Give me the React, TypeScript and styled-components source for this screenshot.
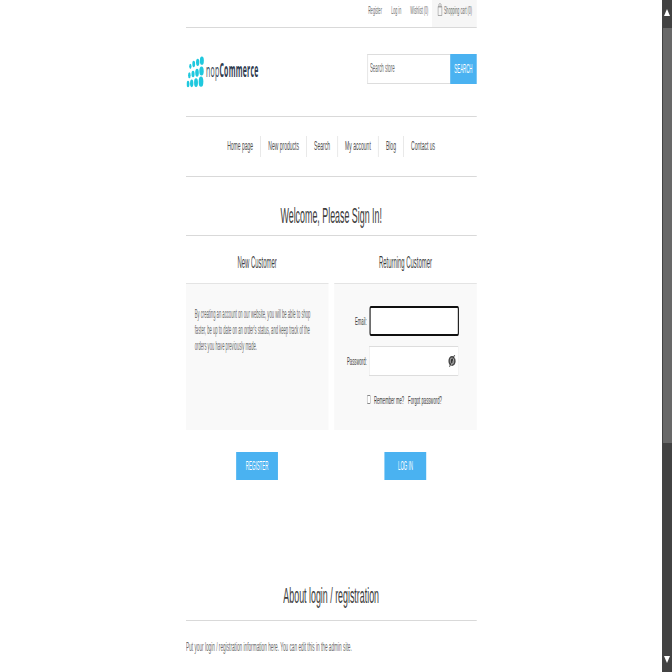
import React from "react";
import styled, { createGlobalStyle } from "styled-components";

// The shop column is condensed horizontally; x() converts a visible width
// into the column's own uncondensed units.
const K = 0.3634;
const x = (px: number) => `${px / K}px`;

const Global = createGlobalStyle`
  * { box-sizing: border-box; }
  body { margin: 0; background: #fff; overflow: hidden; }
  button, input { font-family: inherit; border-radius: 0; margin: 0; }
`;

const Screen = styled.div`
  display: flex;
  width: 672px;
  height: 672px;
  overflow: hidden;
  background: #fff;
  font-family: "Liberation Sans", Arial, sans-serif;
`;
const Viewport = styled.main`
  width: 662px;
  height: 672px;
  overflow: hidden;
  padding-left: 185.6px;
`;
const Column = styled.div`
  width: ${x(290.6)};
  transform: scaleX(${K});
  transform-origin: 0 0;
  color: #3c3c3c;
  white-space: nowrap;
`;

const Wide = styled.span<{ $by: number; $left?: boolean }>`
  display: inline-block;
  transform: scaleX(${(p) => p.$by});
  transform-origin: ${(p) => (p.$left ? "0 0" : "50% 0")};
`;

const TopBar = styled.div`
  display: flex;
  justify-content: flex-end;
  height: 28px;
  border-bottom: 1px solid #d9d9d9;
  font-size: 10.1px;
  line-height: 21px;
  color: #6c6c6c;
`;
const TopLink = styled.span<{ $w: number }>`
  width: ${(p) => x(p.$w)};
`;
const Cart = styled.span`
  display: flex;
  gap: ${x(1.4)};
  width: ${x(44.4)};
  padding-left: ${x(5.3)};
  background: #f6f6f6;
`;
const BagSvg = styled.svg`
  width: ${x(5)};
  height: 14px;
  margin-top: 2px;
`;

const Header = styled.header`
  display: flex;
  justify-content: space-between;
  height: 89px;
  padding-top: 26px;
  border-bottom: 1px solid #d9d9d9;
`;
const Logo = styled.div`
  display: flex;
  align-items: flex-start;
  color: #2f3b50;
  font-family: "Open Sans", "Noto Sans", sans-serif;
`;
const DotsSvg = styled.svg`
  width: ${x(18)};
  height: 32px;
  margin: 2px ${x(1.8)} 0 ${x(0.2)};
`;
const LogoText = styled.span<{ $bold?: boolean }>`
  font-size: 19px;
  line-height: 33px;
  font-weight: ${(p) => (p.$bold ? 700 : 400)};
  letter-spacing: 0.75px;
`;
const Search = styled.form`
  display: flex;
  height: 30px;
`;
const SearchInput = styled.input`
  width: ${x(83)};
  height: 29.5px;
  padding: 0 ${x(2)} 1px;
  border: solid #ddd;
  border-width: 1px 0 1px ${x(0.8)};
  font-size: 12px;
  color: #6c6c6c;
  outline: none;
  &::placeholder { color: #6c6c6c; opacity: 1; }
`;
const BlueButton = styled.button<{ $w: number; $h: number; $size: number }>`
  width: ${(p) => x(p.$w)};
  height: ${(p) => p.$h}px;
  padding: 0;
  border: 0;
  background: #4ab2f1;
  color: #fff;
  font-size: ${(p) => p.$size}px;
  text-align: center;
`;

const NavBar = styled.nav`
  display: flex;
  justify-content: center;
  height: 60px;
  padding-top: 19px;
  border-bottom: 1px solid #d9d9d9;
  font-size: 13.5px;
  line-height: 20px;
  color: #4c4c4c;
`;
const NavList = styled.div`
  display: flex;
  transform: scaleX(1.025);
`;
const NavItem = styled.a`
  height: 21px;
  padding: 0 ${x(7)};
  border-right: ${x(0.75)} solid #e2e2e2;
  &:last-child { border-right: 0; }
`;

const Title = styled.h1<{ $top: number; $h: number }>`
  height: ${(p) => p.$h}px;
  margin: 0;
  padding-top: ${(p) => p.$top}px;
  border-bottom: 1px solid #d9d9d9;
  text-align: center;
  font-weight: 400;
  font-size: 21.8px;
  line-height: 28px;
`;
const Cards = styled.div`
  display: flex;
  justify-content: space-between;
`;
const Card = styled.section`
  width: ${x(142.3)};
  display: flex;
  flex-direction: column;
  align-items: center;
`;
const CardTitle = styled.h2`
  margin: 0;
  height: 47px;
  padding-top: 17px;
  font-weight: 400;
  font-size: 15.6px;
  line-height: 20px;
`;
const Panel = styled.div`
  width: 100%;
  height: 147.5px;
  margin-bottom: 22px;
  border-top: 1px solid #e4e4e4;
  background: #f9f9f9;
`;
const Intro = styled.p`
  margin: 0;
  padding: 22px 0 0 ${x(8.9)};
  font-size: 12.2px;
  line-height: 16px;
  color: #6c6c6c;
`;
const Field = styled.label<{ $top: number }>`
  display: flex;
  align-items: center;
  height: 30px;
  margin-top: ${(p) => p.$top}px;
  font-size: 11.6px;
`;
const FieldName = styled.span`
  width: ${x(32.4)};
  margin-right: ${x(2.8)};
  padding-bottom: 1px;
  text-align: right;
`;
const InputBox = styled.span<{ $focus?: boolean }>`
  display: flex;
  align-items: center;
  justify-content: flex-end;
  width: ${x(89.4)};
  height: 30px;
  padding-right: ${x(2.6)};
  background: #fff;
  border-style: solid;
  border-color: ${(p) => (p.$focus ? "#101010" : "#ddd")};
  border-width: ${(p) => (p.$focus ? `2px ${x(1.2)}` : `1px ${x(0.7)}`)};
  border-radius: ${(p) => (p.$focus ? `${x(1.5)} / 3px` : "0")};
`;
const EyeSvg = styled.svg`
  width: ${x(8)};
  height: 14px;
`;
const Options = styled.div`
  display: flex;
  align-items: center;
  height: 16px;
  margin-top: 15.5px;
  padding-left: ${x(32.6)};
  font-size: 11.6px;
`;
const CheckBox = styled.span`
  width: ${x(3.8)};
  height: 9px;
  margin-right: ${x(3.2)};
  background: #fff;
  border: solid #888;
  border-width: 1px ${x(0.6)};
  border-radius: ${x(0.8)} / 2px;
`;
const Forgot = styled.a`
  margin-left: ${x(4)};
`;
const About = styled.p`
  margin: 0;
  padding-top: 18px;
  font-size: 13px;
  line-height: 16px;
  color: #6c6c6c;
`;

const Scrollbar = styled.aside`
  display: flex;
  flex-direction: column;
  align-items: center;
  width: 10px;
  height: 672px;
  background: #424242;
`;
const Thumb = styled.div`
  width: 9px;
  height: 415px;
  background: #686868;
`;
const ArrowSvg = styled.svg<{ $top: number; $bottom: number }>`
  width: 6px;
  height: 7px;
  margin: ${(p) => p.$top}px 0 ${(p) => p.$bottom}px;
`;

const DOTS = [
  [30, 64, 3.4, 8], [40, 57, 4.2, 9.5], [52, 52, 5, 11], [64.5, 47, 6, 12.5],
  [27, 91, 3.8, 9], [38, 87, 4.6, 10], [50, 83, 5.4, 12], [63.5, 78, 6.6, 13.5],
  [23, 117, 4.2, 10], [34, 115, 5, 11.5], [47, 113, 5.8, 13], [62, 110, 7, 15.5],
];

const Bag = () => (
  <BagSvg viewBox="0 0 5 14" preserveAspectRatio="none" fill="none" stroke="#999" strokeWidth="0.8">
    <path d="M.5 4.5h4v9h-4zM1.5 6V2.5q1-2.5 2 0V6" />
  </BagSvg>
);

const Eye = () => (
  <EyeSvg viewBox="0 0 8 14" preserveAspectRatio="none">
    <ellipse cx="4" cy="7" rx="3.6" ry="5" fill="#444" />
    <ellipse cx="4" cy="7" rx="2.2" ry="3.4" fill="#999" />
    <ellipse cx="4" cy="7" rx="1.2" ry="2.2" fill="#333" />
    <path d="M2.2 13.2 7.2 1.6" stroke="#ddd" strokeWidth="0.5" />
    <path d="M1.4 12.8 6.6 1" stroke="#333" strokeWidth="0.8" />
  </EyeSvg>
);

export default function App() {
  return (
    <Screen>
      <Global />
      <Viewport>
        <Column>
          <TopBar>
            <TopLink $w={23}>Register</TopLink>
            <TopLink $w={19}>Log in</TopLink>
            <TopLink $w={22}>Wishlist (0)</TopLink>
            <Cart>
              <Bag />
              Shopping cart (0)
            </Cart>
          </TopBar>
          <Header>
            <Logo>
              <DotsSvg viewBox="18 33 54 96" preserveAspectRatio="none" fill="#1fc8de">
                {DOTS.map(([cx, cy, rx, ry]) => (
                  <ellipse key={`${cx}-${cy}`} cx={cx} cy={cy} rx={rx} ry={ry} />
                ))}
              </DotsSvg>
              <LogoText>nop</LogoText>
              <LogoText $bold>Commerce</LogoText>
            </Logo>
            <Search>
              <SearchInput placeholder="Search store" />
              <BlueButton type="button" $w={26.4} $h={29.5} $size={12}>SEARCH</BlueButton>
            </Search>
          </Header>
          <NavBar>
            <NavList>
              {["Home page", "New products", "Search", "My account", "Blog", "Contact us"].map((t) => (
                <NavItem key={t}>{t}</NavItem>
              ))}
            </NavList>
          </NavBar>
          <Title $top={25} $h={58.5}>
            <Wide $by={1.12}>Welcome, Please Sign In!</Wide>
          </Title>
          <Cards>
            <Card>
              <CardTitle>
                <Wide $by={1.045}>New Customer</Wide>
              </CardTitle>
              <Panel>
                <Intro>
                  <Wide $by={0.936} $left>
                    By creating an account on our website, you will be able to shop
                    <br />
                    faster, be up to date on an order's status, and keep track of the
                    <br />
                    orders you have previously made.
                  </Wide>
                </Intro>
              </Panel>
              <BlueButton $w={41.8} $h={28} $size={12.2}>REGISTER</BlueButton>
            </Card>
            <Card>
              <CardTitle>
                <Wide $by={1.045}>Returning Customer</Wide>
              </CardTitle>
              <Panel>
                <Field $top={22.5}>
                  <FieldName>Email:</FieldName>
                  <InputBox $focus />
                </Field>
                <Field $top={9.5}>
                  <FieldName>Password:</FieldName>
                  <InputBox>
                    <Eye />
                  </InputBox>
                </Field>
                <Options>
                  <CheckBox />
                  Remember me?
                  <Forgot>Forgot password?</Forgot>
                </Options>
              </Panel>
              <BlueButton $w={41.8} $h={28} $size={12.2}>LOG IN</BlueButton>
            </Card>
          </Cards>
          <Title $top={102} $h={141}>
            <Wide $by={1.12}>About login / registration</Wide>
          </Title>
          <About>
            Put your login / registration information here. You can edit this in the admin site.
          </About>
        </Column>
      </Viewport>
      <Scrollbar>
        <ArrowSvg $top={9} $bottom={12} viewBox="0 0 6 7">
          <path d="M3 0 6 7H0z" fill="#fff" />
        </ArrowSvg>
        <Thumb />
        <ArrowSvg $top={213} $bottom={0} viewBox="0 0 6 7">
          <path d="M0 0h6L3 7z" fill="#fff" />
        </ArrowSvg>
      </Scrollbar>
    </Screen>
  );
}
